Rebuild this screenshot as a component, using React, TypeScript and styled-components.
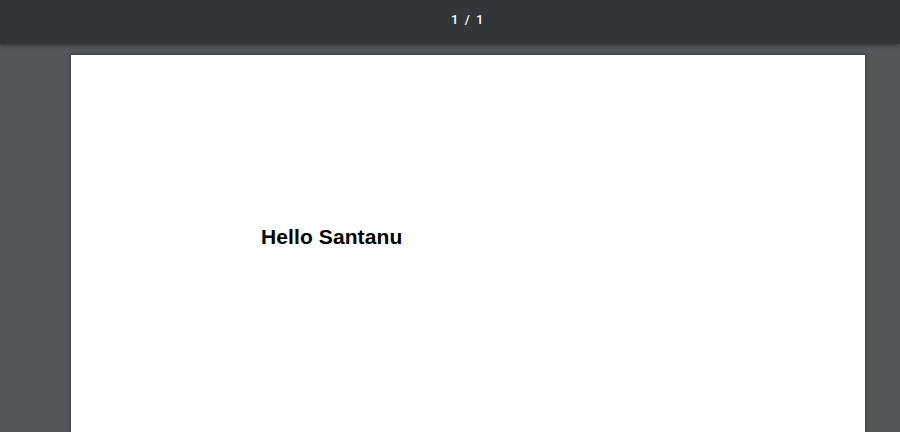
import React from "react";
import styled, { createGlobalStyle } from "styled-components";

const Global = createGlobalStyle`
  html, body { margin: 0; padding: 0; background: #525659; overflow: hidden; }
  body { font-family: "Liberation Sans", Arial, sans-serif; }
`;

const Viewer = styled.div`
  width: 900px;
  height: 432px;
  display: flex;
  flex-direction: column;
  background: #525659;
  overflow: hidden;
`;

const Toolbar = styled.div`
  height: 44px;
  flex: none;
  background: #323639;
  display: flex;
  align-items: center;
  justify-content: center;
  box-shadow: 0 1px 4px rgba(0, 0, 0, 0.45);
  position: relative;
  z-index: 1;
`;

const PageCounter = styled.span`
  font-family: Roboto, "Liberation Sans", sans-serif;
  font-size: 13px;
  font-weight: 500;
  color: #ffffff;
  letter-spacing: 1.5px;
  padding-left: 36px;
  margin-top: -6px;
`;

const Scroller = styled.div`
  flex: 1;
  display: flex;
  justify-content: flex-start;
  padding: 11px 0 0 71px;
`;

const Page = styled.div`
  width: 794px;
  height: 1123px;
  flex: none;
  background: #ffffff;
  box-shadow: 0 0 3px rgba(0, 0, 0, 0.5);
  padding: 170px 0 0 190px;
  box-sizing: border-box;
`;

const Heading = styled.div`
  font-family: "Liberation Sans", Arial, sans-serif;
  font-weight: bold;
  font-size: 21px;
  letter-spacing: 0.1px;
  line-height: 24px;
  color: #000;
`;

export default function App() {
  return (
    <>
      <Global />
      <Viewer>
        <Toolbar>
          <PageCounter>1 / 1</PageCounter>
        </Toolbar>
        <Scroller>
          <Page>
            <Heading>Hello Santanu</Heading>
          </Page>
        </Scroller>
      </Viewer>
    </>
  );
}
